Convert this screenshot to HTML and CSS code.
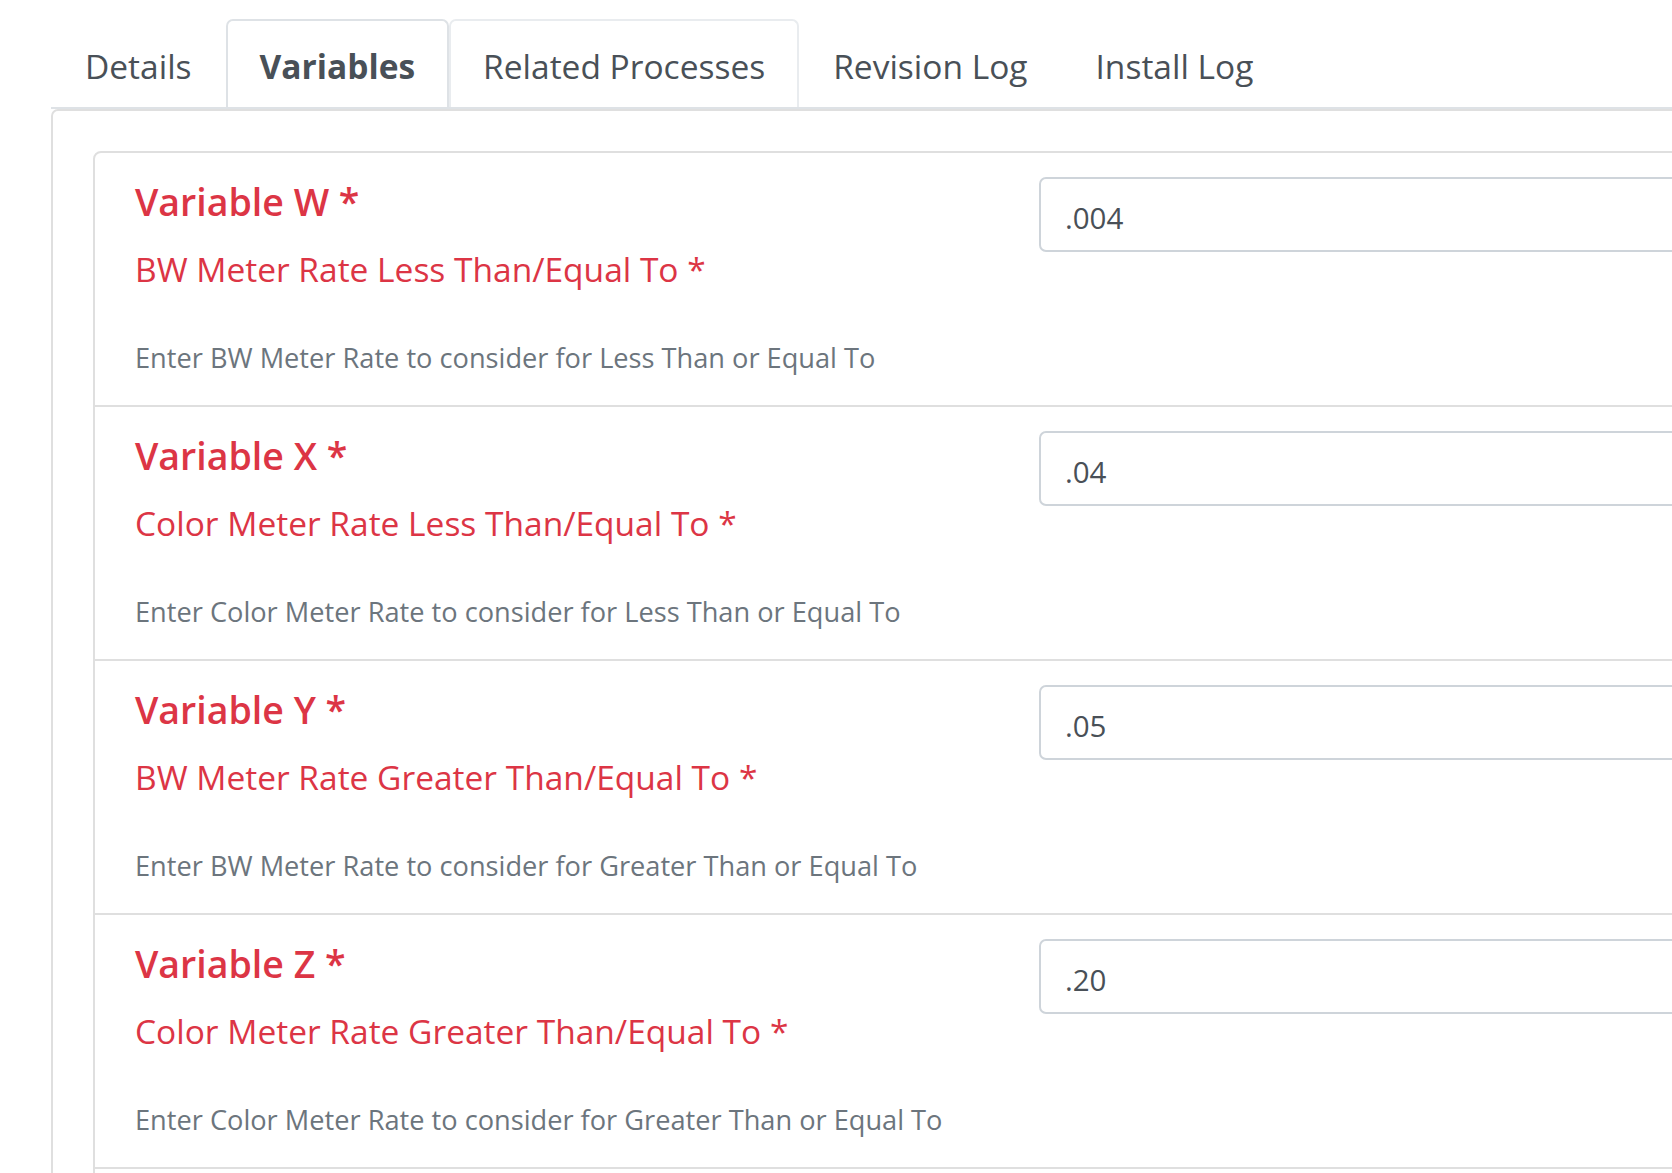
FILE: index.html
```html
<!DOCTYPE html>
<html lang="en">
<head>
<meta charset="utf-8">
<title>Process Variables</title>
<link rel="stylesheet" href="styles.css">
</head>
<body>
<div class="page">
  <ul class="tabs">
    <li class="tab">Details</li>
    <li class="tab tab-active">Variables</li>
    <li class="tab tab-hover">Related Processes</li>
    <li class="tab">Revision Log</li>
    <li class="tab">Install Log</li>
  </ul>

  <div class="tab-pane">
    <div class="var-card">
      <div class="var-row">
        <div class="var-text">
          <div class="var-name">Variable W *</div>
          <div class="var-desc">BW Meter Rate Less Than/Equal To *</div>
          <div class="var-help">Enter BW Meter Rate to consider for Less Than or Equal To</div>
        </div>
        <input class="var-input" type="text" value=".004">
      </div>
      <div class="var-row">
        <div class="var-text">
          <div class="var-name">Variable X *</div>
          <div class="var-desc">Color Meter Rate Less Than/Equal To *</div>
          <div class="var-help">Enter Color Meter Rate to consider for Less Than or Equal To</div>
        </div>
        <input class="var-input" type="text" value=".04">
      </div>
      <div class="var-row">
        <div class="var-text">
          <div class="var-name">Variable Y *</div>
          <div class="var-desc">BW Meter Rate Greater Than/Equal To *</div>
          <div class="var-help">Enter BW Meter Rate to consider for Greater Than or Equal To</div>
        </div>
        <input class="var-input" type="text" value=".05">
      </div>
      <div class="var-row">
        <div class="var-text">
          <div class="var-name">Variable Z *</div>
          <div class="var-desc">Color Meter Rate Greater Than/Equal To *</div>
          <div class="var-help">Enter Color Meter Rate to consider for Greater Than or Equal To</div>
        </div>
        <input class="var-input" type="text" value=".20">
      </div>
      <div class="var-row var-row-empty"></div>
    </div>
  </div>
</div>
</body>
</html>
```

FILE: styles.css
```css
html, body {
  margin: 0;
  padding: 0;
  overflow: hidden;
  background: #fff;
}

body {
  font-family: "Open Sans", "Noto Sans", sans-serif;
  font-size: 33.5px;
  color: #495057;
}

.page {
  width: 1960px;
  padding: 19px 0 0 51px;
}

/* tab strip */
.tabs {
  display: flex;
  list-style: none;
  margin: 0;
  padding: 0;
  border-bottom: 2px solid #dee2e6;
}

.tab {
  padding: 22px 32px 18px;
  line-height: 46px;
  border: 2px solid transparent;
  border-bottom: 0;
  border-radius: 7px 7px 0 0;
  color: #495057;
  white-space: nowrap;
}

.tab-active {
  font-weight: 700;
  border-color: #dee2e6;
  background: #fff;
}

.tab-hover {
  border-color: #e9ecef;
}

/* tab body */
.tab-pane {
  border: 2px solid #dfdfdf;
  border-radius: 7px;
  padding: 40px 40px 200px;
}

.var-card {
  border: 2px solid #dfdfdf;
  border-radius: 8px;
}

.var-row {
  display: grid;
  grid-template-columns: 904px 1fr;
  align-items: start;
  box-sizing: border-box;
  height: 254px;
  padding: 24px 40px 0;
  border-bottom: 2px solid #dfdfdf;
}

.var-row-empty {
  border-bottom: 0;
}

.var-name {
  color: #dc3545;
  font-weight: 600;
  font-size: 37.5px;
  line-height: 49px;
}

.var-desc {
  color: #dc3545;
  font-size: 33.5px;
  line-height: 50px;
  margin-top: 18px;
}

.var-help {
  color: #6c757d;
  font-size: 27.2px;
  line-height: 44px;
  margin-top: 42px;
}

.var-input {
  box-sizing: border-box;
  width: 100%;
  height: 75px;
  margin: 0;
  padding: 8px 24px 2px;
  border: 2px solid #ced4da;
  border-radius: 7px;
  background: #fff;
  font-family: "Open Sans", "Noto Sans", sans-serif;
  font-size: 29.5px;
  color: #495057;
  outline: none;
}
```
